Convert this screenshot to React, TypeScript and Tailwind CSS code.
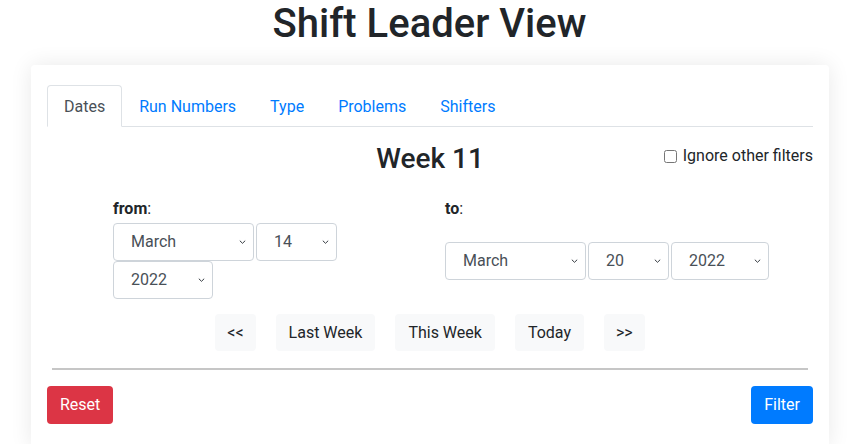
import React, { useState } from 'react';

const months = ['January', 'February', 'March', 'April', 'May', 'June', 'July', 'August', 'September', 'October', 'November', 'December'];
const days = Array.from({ length: 31 }, (_, i) => String(i + 1));
const years = ['2020', '2021', '2022', '2023'];

const Chevron: React.FC = () => (
    <svg className="pointer-events-none absolute right-[8px] top-1/2 -translate-y-1/2" width="7" height="5" viewBox="0 0 7 5" fill="none">
        <path d="M0.8 1.2 L3.5 3.8 L6.2 1.2" stroke="#343a40" strokeWidth="1" />
    </svg>
);

const Select: React.FC<{ value: string; options: string[]; width: string }> = ({ value, options, width }) => (
    <div className={`relative ${width}`}>
        <select
            defaultValue={value}
            className="h-[38px] w-full appearance-none rounded-[4px] border border-[#ced4da] bg-white pl-[17px] pr-6 text-[16px] text-[#495057] outline-none"
        >
            {options.map(o => <option key={o} value={o}>{o}</option>)}
        </select>
        <Chevron />
    </div>
);

const NavButton: React.FC<{ label: string; narrow?: boolean }> = ({ label, narrow }) => (
    <button className={`h-[37px] rounded-[4px] bg-[#f8f9fa] text-[16px] text-[#212529] ${narrow ? 'px-[12px]' : 'px-[13px]'}`}>{label}</button>
);

const tabs = ['Dates', 'Run Numbers', 'Type', 'Problems', 'Shifters'];

export default function App() {
    const [active, setActive] = useState('Dates');

    return (
        <div className="min-h-screen bg-white font-['Roboto',sans-serif] text-[#212529]">
            <h1 className="text-center text-[40px] font-medium leading-[48px] mb-[17px]">Shift Leader View</h1>

            <div className="ml-[31px] w-[798px] rounded-[4px] bg-white px-4 pt-5 pb-6 shadow-[0_0_22px_rgba(0,0,0,0.09)]">
                {/* Tabs */}
                <div className="flex border-b border-[#dee2e6]">
                    {tabs.map(t => (
                        <button
                            key={t}
                            onClick={() => setActive(t)}
                            className={
                                t === active
                                    ? '-mb-px rounded-t-[4px] border border-[#dee2e6] border-b-white bg-white px-4 pt-[9px] pb-[7px] text-[16px] leading-6 text-[#495057]'
                                    : '-mb-px border border-transparent px-4 pt-[9px] pb-[7px] text-[16px] leading-6 text-[#007bff]'
                            }
                        >
                            {t}
                        </button>
                    ))}
                </div>

                {/* Week heading */}
                <div className="grid grid-cols-[1fr_auto_1fr] items-start">
                    <div />
                    <h3 className="mt-[15px] text-[28px] font-medium leading-[34px]">Week 11</h3>
                    <label className="mt-[17px] flex items-center justify-end text-[16px] leading-6">
                        <input type="checkbox" className="mr-[6px] h-[13px] w-[13px]" />
                        Ignore other filters
                    </label>
                </div>

                {/* Date pickers */}
                <div className="mt-[21px] flex pl-[66px]">
                    <div className="w-[300px]">
                        <div className="mb-[2px] text-[16px] leading-6"><b>from</b>:</div>
                        <div className="flex flex-wrap gap-x-[2px]">
                            <Select value="March" options={months} width="w-[141px]" />
                            <Select value="14" options={days} width="w-[81px]" />
                            <Select value="2022" options={years} width="w-[100px]" />
                        </div>
                    </div>
                    <div className="ml-[32px] flex flex-col">
                        <div className="mb-[2px] text-[16px] leading-6"><b>to</b>:</div>
                        <div className="flex flex-1 items-center gap-x-[2px]">
                            <Select value="March" options={months} width="w-[141px]" />
                            <Select value="20" options={days} width="w-[81px]" />
                            <Select value="2022" options={years} width="w-[98px]" />
                        </div>
                    </div>
                </div>

                {/* Quick nav */}
                <div className="mt-[15px] flex justify-center gap-5">
                    <NavButton label="<<" narrow />
                    <NavButton label="Last Week" />
                    <NavButton label="This Week" />
                    <NavButton label="Today" />
                    <NavButton label=">>" narrow />
                </div>

                <div className="mx-[5px] mt-[17px] h-[2px] bg-[#c6c6c6]" />

                <div className="mt-4 flex justify-between">
                    <button className="h-[38px] rounded-[4px] bg-[#dc3545] px-[13px] text-[16px] text-white">Reset</button>
                    <button className="h-[38px] rounded-[4px] bg-[#007bff] px-[13px] text-[16px] text-white">Filter</button>
                </div>
            </div>
        </div>
    );
}
